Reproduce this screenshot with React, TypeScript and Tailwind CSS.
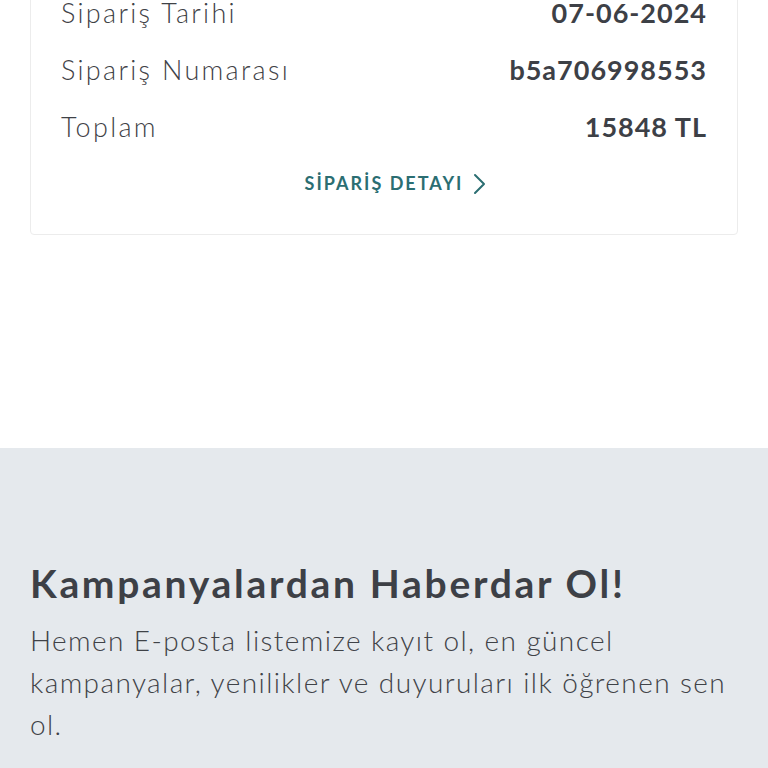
const rows = [
  { label: "Sipariş Tarihi", value: "07-06-2024" },
  { label: "Sipariş Numarası", value: "b5a706998553" },
  { label: "Toplam", value: "15848 TL" },
];

export default function App() {
  return (
    <div
      className="w-[768px] h-[768px] overflow-hidden bg-white text-[#45484d]"
      style={{ fontFamily: "Lato, 'Noto Sans', sans-serif" }}
    >
      {/* Order summary card (top cut off) */}
      <div className="px-[30px] -mt-[30px]">
        <div className="rounded-b-[4px] border border-[#ececec] pt-[14px] px-[30px] pb-[37px]">
          <div className="flex flex-col">
            {rows.map((r) => (
              <div
                key={r.label}
                className="flex items-center justify-between h-[57px] text-[27px]"
              >
                <span className="font-light tracking-[2.3px] text-[#3f4247]">
                  {r.label}
                </span>
                <span className="font-bold tracking-[1px] text-[#3d4046]">
                  {r.value}
                </span>
              </div>
            ))}
          </div>
          <div className="mt-[14px] pl-[23px] flex items-center justify-center gap-[10px] text-[#2b6e72]">
            <span className="text-[18px] font-bold tracking-[2px]">
              SİPARİŞ DETAYI
            </span>
            <svg
              width="13"
              height="22"
              viewBox="0 0 13 22"
              fill="none"
              stroke="currentColor"
              strokeWidth="2"
              strokeLinecap="round"
              strokeLinejoin="round"
            >
              <polyline points="2,2 11,11 2,20" />
            </svg>
          </div>
        </div>
      </div>

      {/* Newsletter section */}
      <div className="mt-[213px] bg-[#e5e9ed] px-[30px] pt-[111px] pb-[40px]">
        <h2 className="text-[39px] font-bold tracking-[2.7px] text-[#3d4046] leading-[48px]">
          Kampanyalardan Haberdar Ol!
        </h2>
        <p className="mt-[12px] text-[28px] font-light tracking-[1.4px] leading-[42px] text-[#3f4247]">
          Hemen E-posta listemize kayıt ol, en güncel kampanyalar, yenilikler ve
          duyuruları ilk öğrenen sen ol.
        </p>
      </div>
    </div>
  );
}
